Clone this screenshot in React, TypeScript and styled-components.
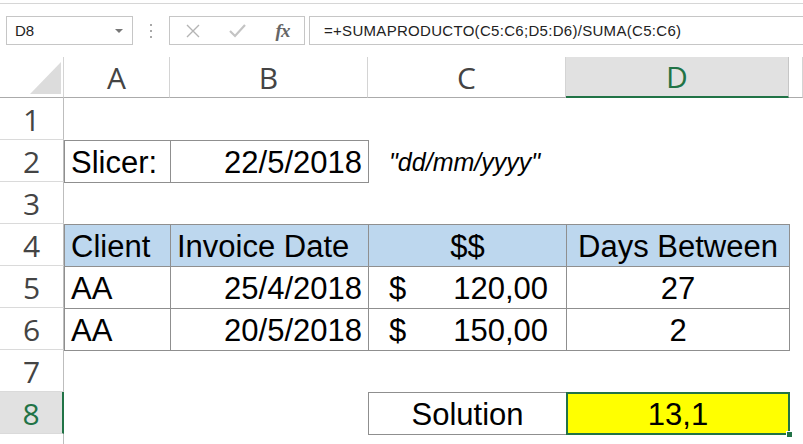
import React from "react";
import styled, { createGlobalStyle, css } from "styled-components";

const GREEN = "#217346";
const BORDER = "#8f8f8f";

const GlobalStyle = createGlobalStyle`
  html, body {
    margin: 0;
    padding: 0;
    background: #ffffff;
    overflow: hidden;
  }
  body {
    font-family: "Liberation Sans", Arial, sans-serif;
  }
`;

const Page = styled.div`
  width: 803px;
  height: 444px;
  overflow: hidden;
  display: flex;
  flex-direction: column;
`;

const TopStrip = styled.div`
  height: 3px;
  border-bottom: 1px solid #d6d6d6;
  flex-shrink: 0;
`;

const Toolbar = styled.div`
  display: flex;
  align-items: center;
  height: 53px;
  padding-left: 6px;
  flex-shrink: 0;
  font-family: "Liberation Sans", Arial, sans-serif;
  font-size: 15px;
  color: #222;
`;

const Box = styled.div`
  height: 29px;
  box-sizing: border-box;
  border: 1px solid #c6c6c6;
  background: #fff;
`;

const NameBox = styled(Box)`
  width: 127px;
  display: flex;
  align-items: center;
  justify-content: space-between;
  padding: 0 9px 0 8px;
`;

const Caret = styled.span`
  width: 0;
  height: 0;
  border-left: 4px solid transparent;
  border-right: 4px solid transparent;
  border-top: 4px solid #777;
`;

const Grip = styled.div`
  display: flex;
  flex-direction: column;
  gap: 4px;
  margin: 0 17px 0 17px;
  span {
    width: 2px;
    height: 2px;
    background: #a8a8a8;
  }
`;

const ButtonsBox = styled(Box)`
  width: 136px;
  display: grid;
  grid-template-columns: repeat(3, 45px);
  align-items: center;
  justify-items: center;
`;

const FxLabel = styled.span`
  font-family: "Liberation Serif", "Times New Roman", serif;
  font-style: italic;
  font-weight: bold;
  font-size: 19px;
  color: #666;
  letter-spacing: -1px;
`;

const FormulaBox = styled(Box)`
  flex: 1;
  margin: 0 -10px 0 4px;
  display: flex;
  align-items: center;
  padding-left: 14px;
  white-space: nowrap;
  letter-spacing: 0.3px;
`;

const Sheet = styled.div`
  display: grid;
  grid-template-columns: 64px 106px 198px 198px 223px 1fr;
  grid-template-rows: 41px repeat(9, 42px);
`;

const headFont = css`
  font-family: "Open Sans", "Liberation Sans", sans-serif;
  font-size: 30px;
  color: #444;
  display: flex;
  align-items: center;
  justify-content: center;
  box-sizing: border-box;
`;

const Corner = styled.div`
  border-right: 1px solid #d4d4d4;
  border-bottom: 1px solid #ababab;
  box-sizing: border-box;
  svg {
    display: block;
  }
`;

const ColHead = styled.div<{ $active?: boolean }>`
  ${headFont};
  border-right: 1px solid #d4d4d4;
  border-bottom: 1px solid #ababab;
  ${(p) =>
    p.$active &&
    css`
      background: #e1e1e1;
      color: ${GREEN};
      border-bottom: 2px solid ${GREEN};
      border-right-color: #c6c6c6;
    `}
`;

const RowHead = styled.div<{ $active?: boolean }>`
  ${headFont};
  border-right: 1px solid #bdbdbd;
  border-bottom: 1px solid #dadada;
  padding-top: 2px;
  ${(p) =>
    p.$active &&
    css`
      background: #e1e1e1;
      color: ${GREEN};
      border-right: 2px solid ${GREEN};
    `}
`;

type Align = "left" | "right" | "center" | "split";

const Cell = styled.div<{
  $align?: Align;
  $boxed?: boolean;
  $fill?: string;
  $selected?: boolean;
}>`
  display: flex;
  align-items: center;
  box-sizing: border-box;
  padding: 2px 6px 0 6px;
  font-size: 31px;
  color: #000;
  white-space: nowrap;
  min-width: 0;
  background: ${(p) => p.$fill ?? "transparent"};
  justify-content: ${(p) =>
    p.$align === "right"
      ? "flex-end"
      : p.$align === "center"
      ? "center"
      : p.$align === "split"
      ? "space-between"
      : "flex-start"};
  ${(p) =>
    p.$align === "split" &&
    css`
      padding: 2px 18px 0 20px;
    `}
  ${(p) =>
    p.$boxed &&
    css`
      border: 1px solid ${BORDER};
      margin: 0 -1px -1px 0;
    `}
  ${(p) =>
    p.$selected &&
    css`
      position: relative;
      z-index: 2;
      border: 2px solid ${GREEN};
      margin: 0 -1px -1px 0;
      &::after {
        content: "";
        position: absolute;
        right: -5px;
        bottom: -5px;
        width: 5px;
        height: 5px;
        background: ${GREEN};
        border: 1px solid #fff;
      }
    `}
`;

const Note = styled.span`
  font-style: italic;
  font-size: 25px;
  padding-left: 15px;
`;

const BLUE = "#bdd7ee";

const Empty = ({ n }: { n: number }) => (
  <>
    {Array.from({ length: n }).map((_, i) => (
      <Cell key={i} />
    ))}
  </>
);

const App = () => {
  return (
    <Page>
      <GlobalStyle />
      <TopStrip />
      <Toolbar>
        <NameBox>
          <span>D8</span>
          <Caret />
        </NameBox>
        <Grip>
          <span />
          <span />
          <span />
        </Grip>
        <ButtonsBox>
          <svg width="14" height="14" viewBox="0 0 14 14">
            <path d="M1 1 L13 13 M13 1 L1 13" stroke="#b4b4b4" strokeWidth="1.4" fill="none" />
          </svg>
          <svg width="17" height="14" viewBox="0 0 17 14">
            <path d="M1 7 L6 12 L16 1" stroke="#c4c4c4" strokeWidth="2.2" fill="none" />
          </svg>
          <FxLabel>fx</FxLabel>
        </ButtonsBox>
        <FormulaBox>=+SUMAPRODUCTO(C5:C6;D5:D6)/SUMA(C5:C6)</FormulaBox>
      </Toolbar>

      <Sheet>
        <Corner>
          <svg width="63" height="40" viewBox="0 0 63 40">
            <polygon points="30,37 61,37 61,5" fill="#dcdcdc" />
          </svg>
        </Corner>
        <ColHead>A</ColHead>
        <ColHead>B</ColHead>
        <ColHead>C</ColHead>
        <ColHead $active>D</ColHead>
        <ColHead />

        <RowHead>1</RowHead>
        <Empty n={5} />

        <RowHead>2</RowHead>
        <Cell $boxed>Slicer:</Cell>
        <Cell $boxed $align="right">
          22/5/2018
        </Cell>
        <Cell>
          <Note>"dd/mm/yyyy"</Note>
        </Cell>
        <Empty n={2} />

        <RowHead>3</RowHead>
        <Empty n={5} />

        <RowHead>4</RowHead>
        <Cell $boxed $fill={BLUE}>
          Client
        </Cell>
        <Cell $boxed $fill={BLUE}>
          Invoice Date
        </Cell>
        <Cell $boxed $fill={BLUE} $align="center">
          $$
        </Cell>
        <Cell $boxed $fill={BLUE} $align="center">
          Days Between
        </Cell>
        <Cell />

        <RowHead>5</RowHead>
        <Cell $boxed>AA</Cell>
        <Cell $boxed $align="right">
          25/4/2018
        </Cell>
        <Cell $boxed $align="split">
          <span>$</span>
          <span>120,00</span>
        </Cell>
        <Cell $boxed $align="center">
          27
        </Cell>
        <Cell />

        <RowHead>6</RowHead>
        <Cell $boxed>AA</Cell>
        <Cell $boxed $align="right">
          20/5/2018
        </Cell>
        <Cell $boxed $align="split">
          <span>$</span>
          <span>150,00</span>
        </Cell>
        <Cell $boxed $align="center">
          2
        </Cell>
        <Cell />

        <RowHead>7</RowHead>
        <Empty n={5} />

        <RowHead $active>8</RowHead>
        <Empty n={2} />
        <Cell $boxed $align="center">
          Solution
        </Cell>
        <Cell $selected $fill="#ffff00" $align="center">
          13,1
        </Cell>
        <Cell />

        <RowHead>9</RowHead>
        <Empty n={5} />
      </Sheet>
    </Page>
  );
};

export default App;
